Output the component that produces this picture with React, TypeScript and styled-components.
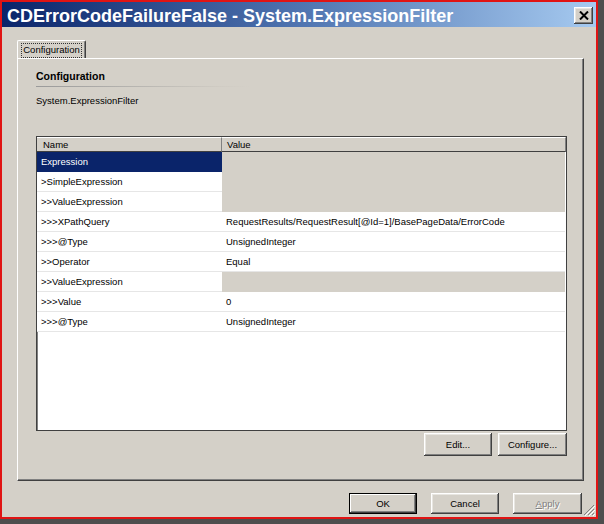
import React from "react";
import styled, { createGlobalStyle, css } from "styled-components";

const GlobalStyle = createGlobalStyle`
  html, body { margin: 0; padding: 0; }
  body {
    background: #4e4e4e;
    width: 604px;
    height: 524px;
    overflow: hidden;
    font-family: "Liberation Sans", Arial, sans-serif;
    font-size: 9.5px;
    color: #000;
  }
`;

const Frame = styled.div`
  position: relative;
  box-sizing: border-box;
  width: 598px;
  height: 519px;
  border: 2px solid #e01414;
  background: #d4d0c8;
  display: flex;
  flex-direction: column;
`;

const TitleBar = styled.div`
  box-sizing: border-box;
  height: 25px;
  padding: 4px 3px 0 5px;
  display: flex;
  justify-content: space-between;
  align-items: flex-start;
  background: linear-gradient(to right, #0a246a 0%, #4f74b0 50%, #a6caf0 100%);
`;

const TitleText = styled.div`
  font-family: "Liberation Sans", Arial, sans-serif;
  font-weight: bold;
  font-size: 18px;
  line-height: 21px;
  color: #fff;
  white-space: nowrap;
`;

const bevel = css`
  background: #d4d0c8;
  box-shadow: inset -1px -1px #404040, inset 1px 1px #ffffff,
    inset -2px -2px #808080, inset 2px 2px #e8e6e1;
`;

const CloseButton = styled.div`
  ${bevel};
  width: 19px;
  height: 17px;
  margin-top: 1px;
  display: flex;
  align-items: center;
  justify-content: center;
`;

const Body = styled.div`
  flex: 1;
  display: flex;
  flex-direction: column;
  padding: 13px 12px 0 15px;
`;

const TabStrip = styled.div`
  display: flex;
  height: 18px;
`;

const Tab = styled.div`
  box-sizing: border-box;
  width: 69px;
  height: 18px;
  border-left: 1px solid #fff;
  border-top: 1px solid #fff;
  border-right: 1px solid #404040;
  box-shadow: inset -1px 0 #808080;
  border-radius: 2px 2px 0 0;
  padding: 2px 3px 0 3px;
  display: flex;
`;

const FocusLabel = styled.span`
  flex: 1;
  border: 1px dotted #333;
  line-height: 12px;
  text-align: center;
  height: 13px;
`;

const Panel = styled.div`
  box-sizing: border-box;
  height: 423px;
  border-left: 1px solid #fff;
  border-top: 1px solid #fff;
  border-right: 1px solid #404040;
  border-bottom: 1px solid #404040;
  box-shadow: inset -1px -1px #808080;
  padding: 11px 16px 0 18px;
  display: flex;
  flex-direction: column;
`;

const Heading = styled.div`
  font-weight: bold;
  font-size: 10.5px;
  line-height: 13px;
  padding-bottom: 3px;
`;

const HeadingRule = styled.div`
  width: 214px;
  height: 1px;
  background: linear-gradient(to right, #9a9a9a, #cfcbc3 85%, #d4d0c8);
`;

const Description = styled.div`
  margin-top: 8px;
  line-height: 12px;
`;

const Grid = styled.div`
  box-sizing: border-box;
  margin-top: 29px;
  height: 295px;
  border: 1px solid #404040;
  box-shadow: inset 1px 1px #808080;
  background: #fff;
  display: flex;
  flex-direction: column;
`;

const HeaderRow = styled.div`
  display: grid;
  grid-template-columns: 185px 1fr;
  height: 15px;
`;

const HeaderCell = styled.div<{ $pad: number }>`
  box-sizing: border-box;
  background: #d4d0c8;
  border-top: 1px solid #fff;
  border-bottom: 1px solid #404040;
  border-right: 1px solid #808080;
  padding-left: ${(p) => p.$pad}px;
  line-height: 13px;
`;

const Row = styled.div`
  display: grid;
  grid-template-columns: 185px 1fr;
  height: 20px;
`;

const NameCell = styled.div<{ $selected?: boolean }>`
  box-sizing: border-box;
  padding-left: 4px;
  line-height: 19px;
  border-bottom: 1px solid ${(p) => (p.$selected ? "#0a246a" : "#e6e6e6")};
  background: ${(p) => (p.$selected ? "#0a246a" : "#fff")};
  color: ${(p) => (p.$selected ? "#fff" : "#000")};
  white-space: nowrap;
`;

const ValueCell = styled.div<{ $empty?: boolean }>`
  box-sizing: border-box;
  padding-left: 4px;
  line-height: 19px;
  margin-right: 1px;
  border-bottom: 1px solid ${(p) => (p.$empty ? "#d4d0c8" : "#e6e6e6")};
  background: ${(p) => (p.$empty ? "#d4d0c8" : "#fff")};
  white-space: nowrap;
`;

const ActionRow = styled.div`
  display: flex;
  justify-content: flex-end;
  gap: 6px;
  margin-top: 2px;
`;

const Button = styled.div<{ $w: number; $h: number; $default?: boolean; $disabled?: boolean }>`
  ${bevel};
  box-sizing: border-box;
  width: ${(p) => p.$w}px;
  height: ${(p) => p.$h}px;
  display: flex;
  align-items: center;
  justify-content: center;
  color: ${(p) => (p.$disabled ? "#808080" : "#000")};
  text-shadow: ${(p) => (p.$disabled ? "1px 1px #fff" : "none")};
  ${(p) =>
    p.$default &&
    css`
      border: 1px solid #000;
      box-shadow: inset -1px -1px #404040, inset 1px 1px #ffffff,
        inset -2px -2px #808080;
    `}
`;

const Footer = styled.div`
  display: flex;
  justify-content: flex-end;
  gap: 14px;
  margin-top: 12px;
  padding-right: 2px;
`;

const SizeGrip = styled.svg`
  position: absolute;
  right: 1px;
  bottom: 1px;
`;

type RowData = { name: string; value?: string; selected?: boolean };

const rows: RowData[] = [
  { name: "Expression", selected: true },
  { name: ">SimpleExpression" },
  { name: ">>ValueExpression" },
  { name: ">>>XPathQuery", value: "RequestResults/RequestResult[@Id=1]/BasePageData/ErrorCode" },
  { name: ">>>@Type", value: "UnsignedInteger" },
  { name: ">>Operator", value: "Equal" },
  { name: ">>ValueExpression" },
  { name: ">>>Value", value: "0" },
  { name: ">>>@Type", value: "UnsignedInteger" },
];

export default function App() {
  return (
    <>
      <GlobalStyle />
      <Frame>
        <TitleBar>
          <TitleText>CDErrorCodeFailureFalse - System.ExpressionFilter</TitleText>
          <CloseButton>
            <svg width="10" height="9" viewBox="0 0 10 9">
              <path d="M1 0.5 L9 8.5 M9 0.5 L1 8.5" stroke="#000" strokeWidth="2" />
            </svg>
          </CloseButton>
        </TitleBar>
        <Body>
          <TabStrip>
            <Tab>
              <FocusLabel>Configuration</FocusLabel>
            </Tab>
          </TabStrip>
          <Panel>
            <Heading>Configuration</Heading>
            <HeadingRule />
            <Description>System.ExpressionFilter</Description>
            <Grid>
              <HeaderRow>
                <HeaderCell $pad={6}>Name</HeaderCell>
                <HeaderCell $pad={5}>Value</HeaderCell>
              </HeaderRow>
              {rows.map((r, i) => (
                <Row key={i}>
                  <NameCell $selected={r.selected}>{r.name}</NameCell>
                  <ValueCell $empty={r.value === undefined}>{r.value ?? ""}</ValueCell>
                </Row>
              ))}
            </Grid>
            <ActionRow>
              <Button $w={68} $h={23}>Edit...</Button>
              <Button $w={69} $h={23}>Configure...</Button>
            </ActionRow>
          </Panel>
          <Footer>
            <Button $w={68} $h={21} $default>OK</Button>
            <Button $w={68} $h={21}>Cancel</Button>
            <Button $w={69} $h={21} $disabled>
              <span>
                <u>A</u>pply
              </span>
            </Button>
          </Footer>
        </Body>
        <SizeGrip width="12" height="12" viewBox="0 0 12 12">
          <path d="M11 1 L1 11 M11 5 L5 11 M11 9 L9 11" stroke="#808080" strokeWidth="1" />
          <path d="M12 2 L2 12 M12 6 L6 12 M12 10 L10 12" stroke="#fff" strokeWidth="1" />
        </SizeGrip>
      </Frame>
    </>
  );
}
